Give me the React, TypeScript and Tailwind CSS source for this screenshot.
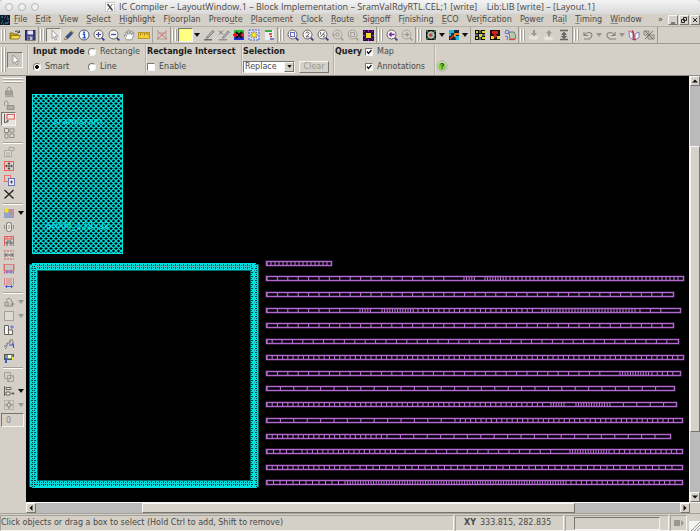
import { Fragment, type ReactNode } from "react";

const raised =
  "border border-t-[#f6f5f2] border-l-[#f6f5f2] border-b-[#77756f] border-r-[#77756f] bg-[#d6d2ca]";
const sunken =
  "border border-t-[#77756f] border-l-[#77756f] border-b-[#f6f5f2] border-r-[#f6f5f2]";
const cell =
  "border border-t-[#a5a29a] border-l-[#a5a29a] border-b-[#f6f5f2] border-r-[#f6f5f2]";

/* ---------- icons (12 x 12 grid) ---------- */

function Svg({ children }: { children: ReactNode }) {
  return (
    <svg viewBox="0 0 12 12" className="size-3 shrink-0" fill="none" aria-hidden="true">
      {children}
    </svg>
  );
}

function Lens({ dim, children }: { dim?: boolean; children?: ReactNode }) {
  const c = dim ? "#a3a099" : "#666";
  return (
    <Svg>
      <circle cx="5.5" cy="5.5" r="4.5" fill={dim ? "#d6d2ca" : "#f4f4f4"} stroke={c} />
      <path d="M8.8 8.8 11.3 11.3" stroke={dim ? "#a3a099" : "#3a3a90"} strokeWidth="1.8" />
      {children}
    </Svg>
  );
}

const pointer = (
  <Svg>
    <path d="M4 1v8.5l2-1.8 1.4 3.3 1.3-.6L7.3 7.2H10z" fill="#fff" stroke="#8a8a8a" strokeWidth=".8" />
  </Svg>
);
const icons: Record<string, ReactNode> = {
  pointer,
  open: (
    <Svg>
      <path d="M1 10V4h3l1 1h4v1.500" fill="#c9a820" stroke="#6b5a10" strokeWidth=".7" />
      <path d="M1 10 3 6.500h8.500L9.500 10z" fill="#f3dc4a" stroke="#6b5a10" strokeWidth=".7" />
      <path d="M6 2.500q2.500-1.500 4 .8M10.500 1.500v2H8.500" stroke="#222" strokeWidth=".8" />
    </Svg>
  ),
  save: (
    <Svg>
      <rect x="1.500" y="1.500" width="9.500" height="9.500" fill="#3c3c86" stroke="#26264f" />
      <rect x="3.500" y="1.500" width="5.500" height="4" fill="#e4e6f4" />
      <rect x="3.500" y="7.500" width="5" height="3.500" fill="#bcbcd0" />
      <rect x="4.200" y="8.200" width="1.500" height="2.500" fill="#26264f" />
    </Svg>
  ),
  pencil: (
    <Svg>
      <path d="M1.500 10.500 3 7.500 8.500 2l2 1.500-5.500 6z" fill="#3452a0" stroke="#222" strokeWidth=".6" />
      <path d="M8 2.500 9 1.500l2 1.300-1 1.400z" fill="#e0b040" />
      <path d="M1.200 10.800 2.600 8l1.600 1.600z" fill="#e8c070" />
    </Svg>
  ),
  info: (
    <Svg>
      <circle cx="6" cy="6" r="5" fill="#fff" stroke="#445" strokeWidth=".9" />
      <path d="M4.800 5.200h1.700v3.500M4.500 8.900h3.300" stroke="#1a50c0" strokeWidth="1.400" />
      <circle cx="6" cy="3.200" r="1" fill="#1a50c0" />
    </Svg>
  ),
  zoomIn: <Lens><path d="M3 5.500h5M5.500 3v5" stroke="#44449a" strokeWidth="1.200" /></Lens>,
  zoomOut: <Lens><path d="M3 5.500h5" stroke="#44449a" strokeWidth="1.200" /></Lens>,
  hand: (
    <Svg>
      <path d="M3.500 10.800 1 6.500l1-.6L3.500 7.500 2.800 3l1.200-.3L5 5.500V1.300h1.300L6.800 5.300 8 1.800l1.200.4L8.600 6 10 3.600l1 .5-1.200 4.400L9 10.800z" fill="#fff" stroke="#777" strokeWidth=".7" />
    </Svg>
  ),
  ruler: (
    <Svg>
      <rect x=".5" y="3.500" width="11" height="6" fill="#f4cf3c" stroke="#b58a10" strokeWidth=".8" />
      <path d="M2.500 4v2.500M4.500 4v1.500M6.500 4v2.500M8.500 4v1.500M10 4v2.500" stroke="#8a6400" strokeWidth=".7" />
    </Svg>
  ),
  redX: (
    <Svg>
      <rect x="2" y="4" width="8" height="6" stroke="#aaa69e" />
      <path d="M1 1.500 11 10.500M11 1.500 1 10.500" stroke="#d9736e" />
    </Svg>
  ),
  yellow: <Svg><rect x="0" y="0" width="12" height="12" fill="#ffff80" /></Svg>,
  penGray: (
    <Svg>
      <path d="M3 9 9.500 1.500l1.500 1.200L5 9z" fill="#bbb" stroke="#666" strokeWidth=".8" />
      <path d="M1 10.800h8" stroke="#555" strokeWidth="1.200" />
    </Svg>
  ),
  penX: (
    <Svg>
      <path d="M4 9 10 2l1.500 1L6 9z" fill="#bbb" stroke="#777" strokeWidth=".8" />
      <path d="M1 10.800h8M1 1.500l4 4M5 1.500l-4 4" stroke="#666" strokeWidth=".9" />
    </Svg>
  ),
  redGreen: (
    <Svg>
      <rect x="1" y="1" width="10" height="3" fill="#20c030" />
      <rect x="1" y="4" width="10" height="4" fill="#e02020" />
      <rect x="1" y="8" width="10" height="3" fill="#2030d0" />
      <path d="M3 3l6 6M9 3 3 9" stroke="#111" strokeWidth="1.800" />
      <path d="M0 6h5" stroke="#e02020" strokeWidth="2" />
    </Svg>
  ),
  flower: (
    <Svg>
      <rect x="1" y="1" width="10" height="10" fill="#d6dcf8" stroke="#5060d0" strokeDasharray="2 1" />
      <path d="M6 2v8M2 6h8M3 3l6 6M9 3 3 9" stroke="#6a7450" strokeWidth=".8" />
      <circle cx="6" cy="6" r="2.400" fill="#ffec30" stroke="#a08a10" strokeWidth=".6" />
    </Svg>
  ),
  tree: (
    <Svg>
      <rect x="2" y="1" width="9" height="10" fill="#eee" />
      <rect x="2" y="1" width="7" height="2" fill="#30b040" />
      <path d="M6 5h3M7 7.500h2" stroke="#d03030" strokeWidth="1.300" />
      <path d="M7 10h4" stroke="#3050c0" strokeWidth="1.300" />
    </Svg>
  ),
  fit: <Lens><rect x="3.500" y="3.500" width="4" height="4" stroke="#6a6ac8" /></Lens>,
  two: (
    <Lens><path d="M4 4.500q0-1.500 1.500-1.500T7 4.500q0 1-3 3.300h3.300" stroke="#555" strokeWidth=".9" /></Lens>
  ),
  half: (
    <Lens><path d="M3.500 3v2.500M7.500 3 3.500 8M6 5.500q1.800-.3 1.500.8L6 8h2" stroke="#555" strokeWidth=".8" /></Lens>
  ),
  prev: <Lens dim><path d="M0 6h3M4 4h3v3H4z" stroke="#a3a099" /></Lens>,
  box: <Lens dim><path d="M3.500 3.500h4v4h-4z" stroke="#a3a099" /></Lens>,
  sun: (
    <Svg>
      <rect x="1" y="1" width="11" height="11" fill="#2a0a3a" />
      <path d="M6.500 1v11M1 6.500h11M2 2l9 9M11 2 2 11" stroke="#a030c0" strokeWidth="1" strokeDasharray="2 1" />
      <rect x="4" y="4" width="5" height="5" fill="#f0dc30" />
    </Svg>
  ),
  back: <Lens><path d="M8.500 5.500h-5M5.500 3.500l-2 2 2 2" stroke="#7a2aa0" strokeWidth="1.300" /></Lens>,
  fwd: <Lens dim><path d="M2.500 5.500h5M5.500 3.500l2 2-2 2" stroke="#99968f" strokeWidth="1.200" /></Lens>,
  globe: (
    <Svg>
      <rect x="1.500" y="1.500" width="9" height="9" fill="#333" stroke="#111" />
      <circle cx="6" cy="6" r="3.200" fill="#8aa89a" stroke="#ddd" strokeWidth=".8" />
      <circle cx="5.500" cy="6" r="1.600" fill="#d04030" />
      <path d="M1 2h2M9 2h2M1 10h2M9 10h2" stroke="#58c878" />
    </Svg>
  ),
  heat: (
    <Svg>
      <rect x="1" y="1" width="10" height="10" fill="#0c2a38" />
      <path d="M1 1h5v3H3v3H1zM7 7h4v4H8z" fill="#20b8d8" />
      <path d="M6 4h5v2H8v2H6z" fill="#e08828" />
      <path d="M2 10 6 6" stroke="#e03030" strokeWidth="1.600" />
    </Svg>
  ),
  chipY: (
    <Svg>
      <rect x="1" y="1" width="10" height="10" fill="#111" />
      <path d="M2 2h2v2H2zM8 2h3v2H8zM2 8h2v2H2zM8 8h3v2H8zM5 5h3v3H5z" fill="#d0d830" />
      <path d="M1 6h3M8 6h3M6 1v3M6 8v3" stroke="#fff" strokeWidth=".7" />
    </Svg>
  ),
  chipR: (
    <Svg>
      <rect x="1" y="1" width="10" height="10" fill="#161208" />
      <path d="M3 2h6v3H3z" fill="#d82020" />
      <path d="M2 7h3v3H2zM8 7h3v3H8z" fill="#e8d830" />
      <path d="M6 4v5M4 7h4" stroke="#e02020" strokeWidth="1.500" />
    </Svg>
  ),
  tag: (
    <Svg>
      <path d="M2 1 5 2 4 5 1 4zM1 7l3 1-1 3" stroke="#6a6ae0" />
      <path d="M5 3h5l1.500 3v4H6z" fill="#b8c8b0" stroke="#507850" strokeWidth=".8" />
      <path d="M5 10.500h6" stroke="#e04040" strokeWidth="1.300" />
    </Svg>
  ),
  pushDown: (
    <Svg>
      <path d="M1 7l4-1 6 2-3 3-7-1z" fill="#e6e3dc" />
      <path d="M5 1h2v3h2L6 7.500 3 4h2z" fill="#9a978f" />
    </Svg>
  ),
  popUp: (
    <Svg>
      <path d="M1 8l4-1 6 2-3 2.500-7-1z" fill="#e6e3dc" />
      <path d="M5 7.500h2v-3h2L6 1 3 4.500h2z" fill="#9a978f" />
    </Svg>
  ),
  top: (
    <Svg>
      <path d="M2 1.500h8M2 10.500h8" stroke="#666" strokeWidth="1.300" />
      <path d="M6 2.500 9 6H7v1h2.500L6 10 2.500 7H5V6H3z" fill="#666" />
    </Svg>
  ),
  undo: <Svg><path d="M2 3v3.500h4M2.500 6q3-4 7-1.500 1.500 3-2 5M2 10h6" stroke="#85827a" strokeWidth="1.100" /></Svg>,
  redo: <Svg><path d="M10 3v3.500H6M9.500 6q-3-4-7-1.500-1.500 3 2 5M4 10h7" stroke="#85827a" strokeWidth="1.100" /></Svg>,
  book: (
    <Svg>
      <path d="M1 2l4 2v7L1.500 8zM11 3 7 5v6l4-2.500z" fill="#f2f0fa" stroke="#6a68a0" strokeWidth=".8" />
      <path d="M4 1.500q2.500 3 1.500 8.500M5 10.500h3" stroke="#e02828" strokeWidth="1.500" />
    </Svg>
  ),
  grayX: (
    <Svg>
      <path d="M1 2h5v4H1zM5 6h6v4H5z" fill="#c4c1b9" stroke="#8a877f" />
      <path d="M2 10 10 2M2 2l8 8" stroke="#77746c" />
    </Svg>
  ),
  lock: (
    <Svg>
      <path d="M4 6V3.500q2-3 4 0V6" stroke="#9a978f" />
      <path d="M2.500 6h7v4h-7z" fill="#b0ada5" stroke="#8a877f" strokeWidth=".8" />
      <path d="M3 8h6M2 11.300h9" stroke="#8a877f" strokeWidth=".7" />
    </Svg>
  ),
  unlock: (
    <Svg>
      <path d="M1.500 7V3q1.500-2.500 3.500 0v3" stroke="#9a978f" />
      <path d="M4 6.500h7v4H4z" fill="#b0ada5" stroke="#8a877f" strokeWidth=".8" />
    </Svg>
  ),
  flag: (
    <Svg>
      <path d="M4 1.500h7.500v4.500H4z" fill="#fbeaea" stroke="#e06060" strokeWidth="1.200" />
      <path d="M1.500 1v9M2 10l3-3M5 7v2H3" stroke="#555" strokeWidth=".9" />
    </Svg>
  ),
  quad: (
    <Svg>
      <path d="M1.500 1.500h4v4h-4zM7 2h4v3H7zM2 7h3v4H2zM7 7h4v3.500H7z" stroke="#8a877f" fill="#e4e1da" />
    </Svg>
  ),
  props: (
    <Svg>
      <path d="M1.500 4.500h7v6h-7z" stroke="#aaa79f" fill="#dedbd4" />
      <path d="M6 1.500h5v3H6zM3 7h4M3 9h4" stroke="#aaa79f" />
    </Svg>
  ),
  move: (
    <Svg>
      <rect x="1.500" y="1.500" width="9" height="9" stroke="#ee5c5c" />
      <path d="M6 2 7.500 4h-3zM6 10 7.500 8h-3zM2 6 4 4.500v3zM10 6 8 4.500v3z" fill="#444" />
      <path d="M6 3v6M3 6h6" stroke="#555" />
    </Svg>
  ),
  copy: (
    <Svg>
      <rect x="1.500" y="1.500" width="6" height="6" stroke="#ee7070" />
      <rect x="5.500" y="4.500" width="6" height="7" fill="#eceaf6" stroke="#6a70b0" />
      <path d="M7 8h3M8.500 6.500v3" stroke="#445" />
    </Svg>
  ),
  cross: <Svg><path d="M1.500 2 10.500 10.500M10.500 2 1.500 10.500" stroke="#222" strokeWidth="1.300" /></Svg>,
  grad: (
    <Svg>
      <path d="M1 2h10v9H1z" fill="#98a0c4" />
      <path d="M4 2h7v9z" fill="#c09098" />
      <circle cx="3.500" cy="3.500" r="2.200" fill="#f4e020" />
    </Svg>
  ),
  pill: (
    <Svg>
      <rect x="3.500" y="1.500" width="5" height="9" rx="2" fill="#e8e6e0" stroke="#77746c" />
      <path d="M1.500 4v4M10.500 4v4M6 4v4" stroke="#99968f" />
    </Svg>
  ),
  gate: (
    <Svg>
      <path d="M1 1.500h10M1 4h10M1.500 1v10M10.500 1v10M4 1v3M8 1v3" stroke="#e05858" strokeWidth=".9" />
      <path d="M4 11V6h4v5M2 8h8" stroke="#666" />
    </Svg>
  ),
  stretch: (
    <Svg>
      <path d="M1 2h10M1 10h10" stroke="#e05050" strokeDasharray="2 1" />
      <path d="M2 4v4M10 4v4M3 6h6M4 4.500 2.500 6 4 7.500M8 4.500 9.500 6 8 7.500" stroke="#666" />
    </Svg>
  ),
  spanA: (
    <Svg>
      <rect x="1" y="1.500" width="10" height="6" fill="#c8c4c0" stroke="#d88080" />
      <path d="M1.500 1v10M10.500 1v10" stroke="#e06868" />
      <path d="M3 9h6M4 7.500 3 9 4 10.500M8 7.500 9 9l-1 1.500" stroke="#5058d8" />
    </Svg>
  ),
  spanB: (
    <Svg>
      <path d="M1.500 1v7M4 1v7M6 1v7M8 1v7M10.500 1v7" stroke="#e08080" />
      <path d="M2.500 9.500h7M4 8 2.500 9.500 4 11M8 8l1.500 1.500L8 11" stroke="#5058d8" />
    </Svg>
  ),
  rotate: <Svg><path d="M2 10V6h3v4zM3 4q4-4 6 2M7.500 8h4M9.500 6v4M5 10h5" stroke="#8a877f" /></Svg>,
  square: <Svg><rect x="1.500" y="1.500" width="9" height="9" stroke="#a3a099" fill="#dedbd4" /></Svg>,
  panel: (
    <Svg>
      <path d="M1.500 1.500h4v9h-4zM5.500 6h4v4.500h-4z" fill="#f4f2ee" stroke="#66645e" />
      <path d="M7 3h4M9 1v4" stroke="#5a60e0" strokeWidth=".9" />
    </Svg>
  ),
  steps: (
    <Svg>
      <path d="M1 8h3V5h3V2h3M2 11l2-2M10 3v3" stroke="#77746c" />
      <path d="M6 7h4M9 5.500 10.500 7v3" stroke="#4a50e0" strokeWidth="1.100" />
    </Svg>
  ),
  photo: (
    <Svg>
      <rect x="1.500" y="2.500" width="9" height="5" fill="#889880" stroke="#555" />
      <path d="M5 3h3v3H5z" fill="#fff" />
      <path d="M9 5h2v3H9z" fill="#e8e030" />
      <path d="M3 6v5" stroke="#2868c0" strokeWidth="2" />
    </Svg>
  ),
  overlap: <Svg><path d="M1.500 1.500h6v6h-6zM4.500 4.500h6v6h-6zM5 10l5-5" stroke="#a3a099" /></Svg>,
  align: (
    <Svg>
      <path d="M1.500 1v10M3 2.500h5v2H3zM3 7h4v3H3z" stroke="#66645e" fill="#ece9e2" />
      <path d="M8 8.500h3M9.500 7 11 8.500 9.500 10" stroke="#66645e" />
    </Svg>
  ),
  target: (
    <Svg>
      <rect x="1.500" y="1.500" width="9" height="9" stroke="#b5b2aa" />
      <circle cx="6" cy="6" r="2" stroke="#85827a" />
      <path d="M6 2v2M6 8v2M2 6h2M8 6h2" stroke="#85827a" />
    </Svg>
  ),
};

/* ---------- small building blocks ---------- */

function Grip() {
  return (
    <span className="flex w-[7px] shrink-0 gap-px self-stretch py-[2px] pl-px">
      <span className="w-[2px] border-r border-[#a5a29a] bg-white" />
      <span className="w-[2px] border-r border-[#a5a29a] bg-white" />
    </span>
  );
}

function Tool({ name, on }: { name: string; on?: boolean }) {
  return (
    <button
      type="button"
      aria-label={name}
      className={`flex h-[14px] w-[15px] shrink-0 items-center justify-center ${on ? `${sunken} bg-[#e6e3dd]` : ""}`}
    >
      {icons[name]}
    </button>
  );
}

function Drop({ dim }: { dim?: boolean }) {
  return (
    <button type="button" aria-label="More" className="flex w-2 shrink-0 items-center justify-center">
      <svg viewBox="0 0 6 4" className="h-1 w-1.5" aria-hidden="true">
        <path d="M0 0h6L3 4z" fill={dim ? "#99968f" : "#111"} />
      </svg>
    </button>
  );
}

const VSep = () => <span className="mx-px w-px self-stretch bg-[#a5a29a]" />;

function Group({ items }: { items: string[] }) {
  return (
    <div className="flex shrink-0 items-center border-r border-[#9b9890] pr-px">
      <Grip />
      {items.map((it, i) => {
        if (it === "|") return <VSep key={i} />;
        if (it === "v") return <Drop key={i} />;
        if (it === "v-") return <Drop key={i} dim />;
        if (it.startsWith("*")) return <Tool key={i} name={it.slice(1)} on />;
        return <Tool key={i} name={it} />;
      })}
    </div>
  );
}

const groups = [
  ["open", "save"],
  ["*pointer", "pencil", "info", "zoomIn", "zoomOut", "hand", "ruler", "|", "redX"],
  ["*yellow", "v", "penGray", "penX", "redGreen", "flower", "tree"],
  ["fit", "two", "half", "prev", "box", "sun"],
  ["back", "fwd"],
  ["globe", "v", "heat", "v", "|", "chipY", "chipR", "tag"],
  ["pushDown", "popUp", "top"],
  ["undo", "v-", "redo", "v-", "book", "grayX"],
];

const sideTools = [
  ["lock"], ["unlock"], ["*flag"], ["quad"], ["-"],
  ["props"], ["move"], ["copy"], ["cross"], ["-"],
  ["grad", "v"], ["pill"], ["gate"], ["stretch"], ["spanA"], ["spanB"], ["-"],
  ["rotate", "v-"], ["square", "v-"], ["panel"], ["steps"], ["photo"], ["-"],
  ["overlap"], ["align", "v"], ["target", "v-"],
];

const menus: [string, number][] = [
  ["File", 0], ["Edit", 0], ["View", 0], ["Select", 0], ["Highlight", 0], ["Floorplan", 1],
  ["Preroute", 5], ["Placement", 0], ["Clock", 0], ["Route", 0], ["Signoff", 3],
  ["Finishing", 1], ["ECO", 0], ["Verification", 3], ["Power", 1], ["Rail", 2],
  ["Timing", 0], ["Window", 0],
];

function Radio({ label, on }: { label: string; on?: boolean }) {
  return (
    <label className="flex items-center gap-1">
      <input
        type="radio"
        name="mode"
        defaultChecked={on}
        className={`size-2 appearance-none rounded-full bg-white checked:bg-[radial-gradient(circle,#000_2px,#fff_2px)] ${sunken}`}
      />
      {label}
    </label>
  );
}

function Check({ label, on }: { label: string; on?: boolean }) {
  return (
    <label className="flex items-center gap-1">
      <span className="relative flex">
        <input type="checkbox" defaultChecked={on} className={`peer size-2 appearance-none bg-white ${sunken}`} />
        <svg viewBox="0 0 8 8" className="absolute inset-0 hidden size-2 peer-checked:block" fill="none" aria-hidden="true">
          <path d="M2 3.500 3.500 5.500 6.500 2" stroke="#111" strokeWidth="1.300" />
        </svg>
      </span>
      {label}
    </label>
  );
}

const OptSep = () => <span className="w-[2px] shrink-0 border-r border-[#e8e5de] bg-[#b5b2aa]" />;

function Arrow({ d, label }: { d: string; label: string }) {
  return (
    <button type="button" aria-label={label} className={`flex size-[10px] shrink-0 items-center justify-center ${raised}`}>
      <svg viewBox="0 0 6 6" className="size-1.5" aria-hidden="true">
        <path d={d} fill="#111" />
      </svg>
    </button>
  );
}

/* ---------- layout drawing ---------- */

type Run = [number, number, number];
const rows: { y: number; end: number; runs: Run[] }[] = [
  { y: 187, end: 306, runs: [[241, 306, 4]] },
  { y: 202, end: 658, runs: [[241, 438, 10.4], [438, 451, 2.6], [459, 480, 2.6], [480, 658, 4]] },
  { y: 218, end: 648, runs: [[241, 648, 10.4]] },
  { y: 234, end: 655, runs: [[241, 334, 10.4], [334, 347, 2.6], [356, 392, 2.6], [392, 516, 5.2], [516, 614, 3], [614, 655, 10.4]] },
  { y: 249, end: 648, runs: [[241, 648, 10.4]] },
  { y: 265, end: 653, runs: [[241, 256, 5.2], [256, 653, 10.4]] },
  { y: 281, end: 658, runs: [[241, 658, 5.2]] },
  { y: 297, end: 655, runs: [[241, 594, 10.4], [594, 626, 2.6], [626, 655, 5.2]] },
  { y: 312, end: 649, runs: [[241, 649, 13.4]] },
  { y: 328, end: 651, runs: [[241, 525, 5.2], [525, 541, 2.6], [550, 584, 2.6], [584, 651, 13.4]] },
  { y: 344, end: 657, runs: [[241, 429, 13.4], [429, 657, 5.2]] },
  { y: 360, end: 645, runs: [[241, 361, 5.2], [361, 645, 13.4]] },
  { y: 375, end: 657, runs: [[241, 276, 6.5], [276, 379, 5.2], [379, 544, 10.4], [544, 583, 2.6], [583, 657, 5.2]] },
  { y: 391, end: 657, runs: [[241, 334, 5.2], [334, 657, 6.5]] },
  { y: 406, end: 657, runs: [[241, 319, 6.5], [319, 545, 2.6], [545, 657, 5.2]] },
];

function CellRows() {
  return (
    <g fill="none">
      {rows.map(({ y, end, runs }) => (
        <Fragment key={y}>
          <rect x="240.5" y={y - 1.5} width={end - 241} height="4" stroke="#5c3070" strokeWidth="2" />
          <rect x="240.5" y={y - 1.5} width={end - 241} height="4" stroke="#b068cc" strokeWidth="1" />
          <path
            stroke="#c07cdc"
            d={runs
              .map(([a, b, p]) =>
                Array.from({ length: Math.floor((b - a) / p) }, (_, i) => `M${(a + i * p).toFixed(1)} ${y - 1}v3`).join(""),
              )
              .join("")}
          />
        </Fragment>
      ))}
    </g>
  );
}

function ChipView() {
  return (
    <svg className="block h-full w-full" role="img" aria-label="Layout view">
      <defs>
        <pattern id="hatch" width="5" height="5" patternUnits="userSpaceOnUse">
          <path d="M-1-1 6 6M6-1-1 6M-1 4 1 6M4-1 6 1M-1 1 1-1M4 6 6 4" stroke="#00d8d8" strokeWidth="1.300" />
        </pattern>
        <pattern id="ringH" width="4" height="7" x="4" y="187" patternUnits="userSpaceOnUse">
          <rect width="4" height="7" fill="#00e0e0" />
          <path d="M1 1h1v2H1zM1 4h1v2H1zM3 2h1v1H3zM3 4h1v1H3z" fill="#004848" />
        </pattern>
        <pattern id="ringV" width="7" height="4" x="4" y="187" patternUnits="userSpaceOnUse">
          <rect width="7" height="4" fill="#00e0e0" />
          <path d="M1 1h2v1H1zM4 1h2v1H4zM2 3h1v1H2zM4 3h1v1H4z" fill="#004848" />
        </pattern>
      </defs>
      <rect x="6.5" y="18.500" width="90" height="159" fill="url(#hatch)" stroke="#00e4e4" />
      <g fill="#00e4e4" className="font-['DejaVu_Sans'] text-[9px]" textAnchor="middle">
        <text x="52" y="48">sram/sram</text>
        <text x="52" y="153">SRAM_128x32</text>
      </g>
      <rect x="11.500" y="194.500" width="213" height="210" fill="none" stroke="#006a6a" />
      <rect x="3.500" y="188.500" width="229" height="222" fill="none" stroke="#006a6a" />
      <rect x="6" y="187" width="224" height="7" fill="url(#ringH)" />
      <rect x="6" y="405" width="225" height="7" fill="url(#ringH)" />
      <rect x="4" y="189" width="7" height="222" fill="url(#ringV)" />
      <rect x="225" y="189" width="7" height="222" fill="url(#ringV)" />
      <path d="M10 190.500h216" stroke="#7aa0a0" strokeDasharray="6 3" />
      <path d="M10 408.500h216M7.500 194v210M228.500 194v210" stroke="#8a6060" strokeDasharray="1 7" />
      <CellRows />
    </svg>
  );
}

export default function App() {
  return (
    <div className="flex h-screen w-full flex-col overflow-hidden bg-[#d4d0c8] font-['DejaVu_Sans',sans-serif] text-[8px] leading-[10px] text-[#4a4946]">
      <header className="relative flex h-[14px] shrink-0 items-center justify-center rounded-t bg-linear-to-b from-[#f3f3f3] to-[#d9d9d9]">
        <div className="absolute left-[5px] flex gap-[5px]">
          {["Close", "Minimize", "Zoom"].map((n) => (
            <button key={n} type="button" aria-label={n} className="size-2 rounded-full border border-[#b5b5b5] bg-[#efefef]" />
          ))}
        </div>
        <svg viewBox="0 0 10 10" className="mr-1 size-2.5" fill="none" aria-hidden="true">
          <rect x=".5" y=".5" width="9" height="9" fill="#fff" stroke="#ccc" />
          <path d="M2.500 2 7.500 8.500" stroke="#444" strokeWidth="1.600" />
          <path d="M7.500 2 2.500 8.500" stroke="#444" strokeWidth=".8" />
        </svg>
        <h1 className="whitespace-pre font-['Open_Sans',sans-serif] text-[9px]">
          IC Compiler – LayoutWindow.1 – Block Implementation – SramValRdyRTL.CEL;1 [write]    Lib:LIB [write] – [Layout.1]
        </h1>
      </header>

      <nav className="flex h-[13px] shrink-0 items-center border-b border-[#b5b2aa]">
        <svg viewBox="0 0 10 10" className="mr-1 size-2.5 shrink-0" aria-hidden="true">
          <rect width="10" height="10" fill="#0c1c2c" />
          <path d="M1 2h2M5 1h1M7 4h2M2 6h1M5 8h3M1 8h1" stroke="#30a8a0" />
          <path d="M4 3h1M8 7h1M3 9h1M7 2h1" stroke="#c050a0" />
        </svg>
        <div className="mr-4 flex flex-1 justify-between">
          {menus.map(([m, u]) => (
            <button key={m} type="button" className="shrink-0">
              {m.slice(0, u)}
              <u className="decoration-[#8a8780] underline-offset-1">{m[u]}</u>
              {m.slice(u + 1)}
            </button>
          ))}
        </div>
        <span className="flex items-center gap-px">
          <button type="button" aria-label="More menus" className="mr-1">»</button>
          {["M2 7h4", "M3.500 1.500h3v3h-3zM1.500 3.500h3v3h-3z", "M2 2l4 4M6 2 2 6"].map((d) => (
            <button key={d} type="button" aria-label="Layout window control" className={`flex size-[10px] items-center justify-center ${raised}`}>
              <svg viewBox="0 0 8 8" className="size-2" fill="none" aria-hidden="true">
                <path d={d} stroke="#222" />
              </svg>
            </button>
          ))}
        </span>
      </nav>

      <div className="flex h-[17px] shrink-0 border-b border-[#9b9890]">
        {groups.map((g, i) => (
          <Group key={i} items={g} />
        ))}
      </div>

      <div className="flex h-8 shrink-0 border-b border-[#8d8a83] py-px">
        <Grip />
        <button type="button" aria-label="Select mode" className={`mr-1 flex size-4 items-center justify-center self-center ${sunken} bg-[#cbc7be]`}>
          {pointer}
        </button>
        <OptSep />
        <fieldset className="grid shrink-0 grid-cols-[55px_57px] grid-rows-2 items-center pl-1">
          <strong className="whitespace-nowrap text-[#1c1c1b]">Input mode</strong>
          <Radio label="Rectangle" />
          <Radio label="Smart" on />
          <Radio label="Line" />
        </fieldset>
        <OptSep />
        <div className="grid w-[94px] shrink-0 grid-rows-2 items-center">
          <strong className="whitespace-nowrap text-[#1c1c1b]">Rectangle Intersect</strong>
          <Check label="Enable" />
        </div>
        <OptSep />
        <div className="grid shrink-0 grid-cols-[52px_30px] grid-rows-2 items-center gap-x-1 pr-1">
          <strong className="col-span-2 text-[#1c1c1b]">Selection</strong>
          <span className="relative flex">
            <select aria-label="Selection" className={`h-3 w-full appearance-none bg-white pl-px leading-[10px] ${sunken}`}>
              <option>Replace</option>
            </select>
            <span className={`pointer-events-none absolute top-px right-px flex size-[10px] items-center justify-center ${raised}`}>
              <svg viewBox="0 0 6 4" className="h-[3px] w-[5px]" aria-hidden="true">
                <path d="M0 0h6L3 4z" fill="#111" />
              </svg>
            </span>
          </span>
          <button type="button" disabled className={`h-3 leading-[10px] text-[#9a978f] ${raised}`}>Clear</button>
        </div>
        <OptSep />
        <div className="grid w-[99px] shrink-0 grid-cols-[30px_auto] grid-rows-2 items-center">
          <strong className="text-[#1c1c1b]">Query</strong>
          <Check label="Map" on />
          <span />
          <Check label="Annotations" on />
        </div>
        <OptSep />
        <button type="button" aria-label="Help" className="mb-[2px] self-end">
          <svg viewBox="0 0 12 12" className="size-3" fill="none" aria-hidden="true">
            <circle cx="6" cy="6" r="5" fill="#e4ecdc" stroke="#98a090" strokeWidth=".8" />
            <circle cx="6" cy="6.300" r="3.800" fill="#86d040" />
            <path d="M4.500 4.500q1.500-2 3 0 0 1-1.500 1.800v.9M6 8.300v1" stroke="#285018" strokeWidth="1.200" />
          </svg>
        </button>
      </div>

      <div className="flex min-h-0 flex-1">
        <aside className="flex w-[26px] shrink-0 flex-col">
          <span className="mx-[3px] flex h-2 shrink-0 flex-col gap-px pt-[2px]">
            <span className="h-[2px] border-b border-[#a5a29a] bg-white" />
            <span className="h-[2px] border-b border-[#a5a29a] bg-white" />
          </span>
          {sideTools.map(([name, drop], i) =>
            name === "-" ? (
              <span key={i} className="mx-[3px] flex h-[5px] shrink-0 flex-col justify-center">
                <span className="h-[2px] border-b border-white bg-[#a5a29a]" />
              </span>
            ) : (
              <span key={i} className="flex h-[14px] shrink-0 items-center gap-px pl-px">
                <Tool name={name.replace("*", "")} on={name.startsWith("*")} />
                {drop && <Drop dim={drop === "v-"} />}
              </span>
            ),
          )}
          <input
            aria-label="Level"
            defaultValue="0"
            className={`mt-px ml-px h-[14px] w-[23px] pl-1 text-[8px] text-[#8a877f] ${sunken}`}
          />
        </aside>

        <main className="flex min-w-0 flex-1 flex-col">
          <div className="flex min-h-0 flex-1">
            <div className="min-w-0 flex-1 bg-black">
              <ChipView />
            </div>
            <div className="flex w-[11px] shrink-0 flex-col border-l border-[#f6f5f2] bg-[#bababa]">
              <Arrow label="Scroll up" d="M0 4.500h6L3 1.500z" />
              <span className="flex-[60]" />
              <span className={`flex-[286] ${raised}`} />
              <span className="flex-[60]" />
              <Arrow label="Scroll down" d="M0 1.500h6L3 4.500z" />
            </div>
          </div>
          <div className="flex h-[11px] shrink-0 border-t border-[#f6f5f2] pr-[10px]">
            <Arrow label="Scroll left" d="M4.500 0v6L1.500 3z" />
            <span className="flex-[106] bg-[#bababa]" />
            <span className={`flex-[433] ${raised}`} />
            <span className="flex-[105] bg-[#bababa]" />
            <Arrow label="Scroll right" d="M1.500 0v6L4.500 3z" />
          </div>
        </main>
      </div>

      <footer className="flex h-[18px] shrink-0 gap-px border-t border-[#a5a29a] pt-px">
        <p className={`flex min-w-0 flex-1 items-center whitespace-nowrap ${cell}`}>
          Click objects or drag a box to select (Hold Ctrl to add, Shift to remove)
        </p>
        <p className={`flex w-[109px] items-center gap-1 pl-2 ${cell}`}>
          <strong>XY</strong>333.815, 282.835
        </p>
        <div className={`flex w-[104px] items-center px-2 ${cell}`}>
          <span className={`h-[13px] flex-1 ${sunken}`} />
        </div>
        <div className={`flex w-[17px] items-center justify-center ${cell}`}>
          <svg viewBox="0 0 12 8" className="h-2 w-3" aria-hidden="true">
            <path d="M1 1h6v6H1zM8 1l3 3-3 3z" fill="#9a978f" />
          </svg>
        </div>
        <svg viewBox="0 0 12 16" className="h-4 w-3 shrink-0 self-end" fill="none" aria-hidden="true">
          <rect x="1" y="6" width="11" height="10" fill="#f4f4f4" />
          <path d="M3 16 12 7M6 16l6-6M9 16l3-3" stroke="#999" />
        </svg>
      </footer>
    </div>
  );
}
